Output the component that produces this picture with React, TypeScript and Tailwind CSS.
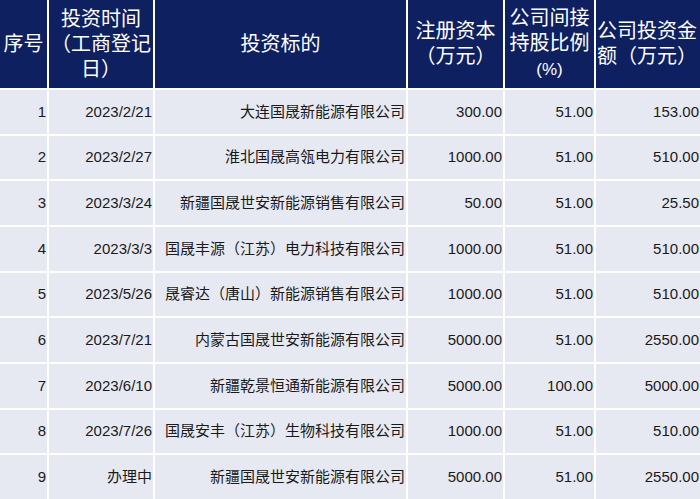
const rows = [
  ["1", "2023/2/21", "大连国晟新能源有限公司", "300.00", "51.00", "153.00"],
  ["2", "2023/2/27", "淮北国晟高瓴电力有限公司", "1000.00", "51.00", "510.00"],
  ["3", "2023/3/24", "新疆国晟世安新能源销售有限公司", "50.00", "51.00", "25.50"],
  ["4", "2023/3/3", "国晟丰源（江苏）电力科技有限公司", "1000.00", "51.00", "510.00"],
  ["5", "2023/5/26", "晟睿达（唐山）新能源销售有限公司", "1000.00", "51.00", "510.00"],
  ["6", "2023/7/21", "内蒙古国晟世安新能源有限公司", "5000.00", "51.00", "2550.00"],
  ["7", "2023/6/10", "新疆乾景恒通新能源有限公司", "5000.00", "100.00", "5000.00"],
  ["8", "2023/7/26", "国晟安丰（江苏）生物科技有限公司", "1000.00", "51.00", "510.00"],
  ["9", "办理中", "新疆国晟世安新能源有限公司", "5000.00", "51.00", "2550.00"],
];

export default function App() {
  return (
    <div
      className="w-[700px] h-[499px] bg-white grid grid-cols-[47px_104px_251px_95px_89px_104px] grid-rows-[88px_repeat(9,1fr)] gap-[2px] overflow-hidden"
      style={{ fontFamily: '"Liberation Sans", "Noto Sans CJK SC", sans-serif' }}
    >
      {/* header */}
      <div className="bg-[#0e2060] text-white text-[20px] leading-[25px] flex items-center justify-center">
        序号
      </div>
      <div className="bg-[#0e2060] text-white text-[20px] leading-[25px] flex items-center justify-center text-center">
        <span>
          投资时间
          <br />
          （工商登记
          <br />
          日）
        </span>
      </div>
      <div className="bg-[#0e2060] text-white text-[20px] leading-[25px] flex items-center justify-center">
        投资标的
      </div>
      <div className="bg-[#0e2060] text-white text-[20px] leading-[25px] flex items-center justify-center text-center">
        <span>
          注册资本
          <br />
          （万元）
        </span>
      </div>
      <div className="bg-[#0e2060] text-white text-[20px] leading-[25px] flex items-center justify-center text-center">
        <span>
          公司间接
          <br />
          持股比例
          <br />
          <span className="text-[17px]">(%)</span>
        </span>
      </div>
      <div className="bg-[#0e2060] text-white text-[20px] leading-[25px] flex items-center pl-[1px]">
        <span>
          公司投资金
          <br />
          额（万元）
        </span>
      </div>

      {/* body */}
      {rows.map((r) =>
        r.map((cell, i) => (
          <div
            key={r[0] + "-" + i}
            className="bg-[#e7e9f2] text-[#1a1a1a] text-[15px] flex items-center justify-end pr-[1px] whitespace-nowrap"
          >
            {cell}
          </div>
        ))
      )}
    </div>
  );
}
